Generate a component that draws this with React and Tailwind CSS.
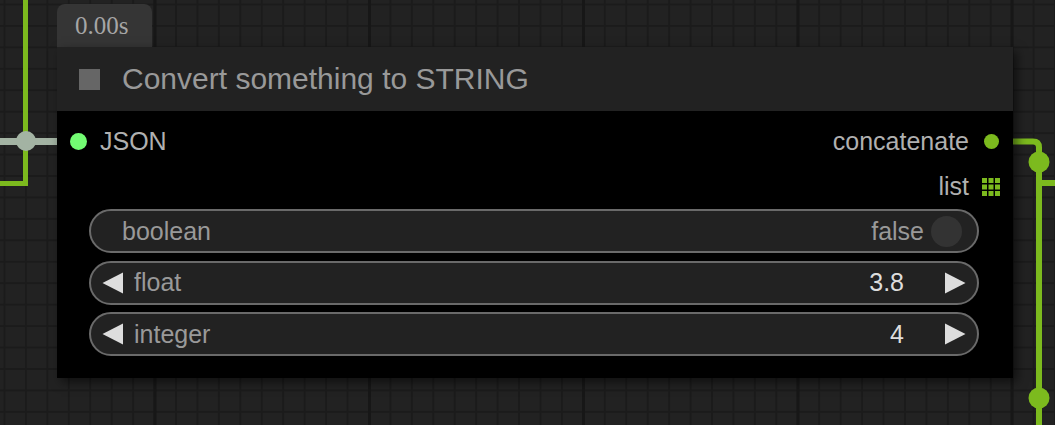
import React from "react";

function Grid() {
  const cell = 21.44;
  const majors = [155, 369.5, 583.5, 798, 1012];
  return (
    <svg className="absolute inset-0" width="1055" height="425">
      <defs>
        <pattern id="g" x="3.5" y="3.5" width={cell} height={cell} patternUnits="userSpaceOnUse">
          <rect width={cell} height={cell} fill="#222222" />
          <rect x="0" y="0" width="2" height={cell} fill="#1b1b1b" />
          <rect x="0" y="0" width={cell} height="2" fill="#1b1b1b" />
        </pattern>
      </defs>
      <rect width="1055" height="425" fill="url(#g)" />
      {majors.map((x) => (
        <rect key={x} x={x - 1.5} y="0" width="3" height="425" fill="#171717" />
      ))}
    </svg>
  );
}

function Wires() {
  const green = "#7cba1e";
  return (
    <svg className="absolute inset-0" width="1055" height="425">
      {/* left green */}
      <path d="M25.5 0 V183.5 H0" stroke={green} strokeWidth="5" fill="none" />
      {/* left grey */}
      <path d="M0 141.5 H60" stroke="#a3b3a3" strokeWidth="7" fill="none" />
      <circle cx="26" cy="141" r="10" fill="#a3b3a3" />
      {/* right green */}
      <path d="M1010 141.5 H1033 Q1039 141.5 1039 147.5 V425" stroke={green} strokeWidth="6" fill="none" />
      <path d="M1039 183 H1055" stroke={green} strokeWidth="6" fill="none" />
      <circle cx="1039" cy="162" r="10.5" fill={green} />
      <circle cx="1039" cy="398" r="10.5" fill={green} />
    </svg>
  );
}

function Tri({ dir }) {
  return (
    <svg width="22" height="22" viewBox="0 0 22 22" className="shrink-0">
      {dir === "left" ? (
        <polygon points="21,0.5 21,21.5 0.5,11" fill="#dddddd" />
      ) : (
        <polygon points="1,0.5 1,21.5 21.5,11" fill="#dddddd" />
      )}
    </svg>
  );
}

function ListIcon() {
  const p = [0, 6.5, 13];
  return (
    <svg width="18" height="18" viewBox="0 0 18 18">
      {p.map((y) =>
        p.map((x) => <rect key={`${x}-${y}`} x={x} y={y} width="5" height="5" fill="#7cba1e" />)
      )}
    </svg>
  );
}

function NumberWidget({ label, value }) {
  return (
    <div className="h-[44px] rounded-full border-2 border-[#6a6a6a] bg-[#222222] flex items-center pl-[11px] pr-[11px]">
      <Tri dir="left" />
      <span className="ml-[10px] text-[#999999]">{label}</span>
      <span className="ml-auto text-[#dddddd]">{value}</span>
      <span className="ml-[40px]">
        <Tri dir="right" />
      </span>
    </div>
  );
}

export default function App() {
  return (
    <div
      className="relative w-[1055px] h-[425px] overflow-hidden bg-[#222222]"
      style={{ fontFamily: '"Liberation Sans", Arial, sans-serif' }}
    >
      <Grid />
      <Wires />

      {/* timing badge */}
      <div
        className="absolute left-[57px] top-[4px] w-[95px] h-[43px] rounded-t-[8px] bg-[#353535] flex items-center pl-[18px] text-[25px] text-[#a6a6a6]"
        style={{ fontFamily: '"Liberation Serif", "Times New Roman", serif' }}
      >
        0.00s
      </div>

      {/* node */}
      <div className="absolute left-[57px] top-[47px] w-[956px] shadow-[4px_4px_10px_rgba(0,0,0,0.55)]">
        <div className="h-[64px] bg-[#222222] flex items-center pl-[22px]">
          <div className="w-[21px] h-[21px] bg-[#666666]" />
          <span className="ml-[22px] text-[30px] leading-none text-[#999999]">
            Convert something to STRING
          </span>
        </div>
        <div className="bg-black pt-[8px] pb-[22px] text-[25px] leading-none">
          <div className="h-[45px] flex items-center pl-[13px] pr-[14px]">
            <div className="w-[17px] h-[17px] rounded-full bg-[#73fc73]" />
            <span className="ml-[13px] text-[#b0b0b0]">JSON</span>
            <span className="ml-auto text-[#b0b0b0]">concatenate</span>
            <div className="ml-[15px] w-[15px] h-[15px] rounded-full bg-[#7cba1e]" />
          </div>
          <div className="h-[45px] flex items-center justify-end pr-[13px]">
            <span className="text-[#b0b0b0]">list</span>
            <span className="ml-[13px] flex">
              <ListIcon />
            </span>
          </div>
          <div className="pl-[32px] pr-[34px] flex flex-col gap-[7.5px]">
            <div className="h-[44px] rounded-full border-2 border-[#6a6a6a] bg-[#222222] flex items-center pl-[31px] pr-[15px]">
              <span className="text-[#999999]">boolean</span>
              <span className="ml-auto text-[#999999]">false</span>
              <div className="ml-[7px] w-[31px] h-[31px] rounded-full bg-[#333333]" />
            </div>
            <NumberWidget label="float" value="3.8" />
            <NumberWidget label="integer" value="4" />
          </div>
        </div>
      </div>
    </div>
  );
}
